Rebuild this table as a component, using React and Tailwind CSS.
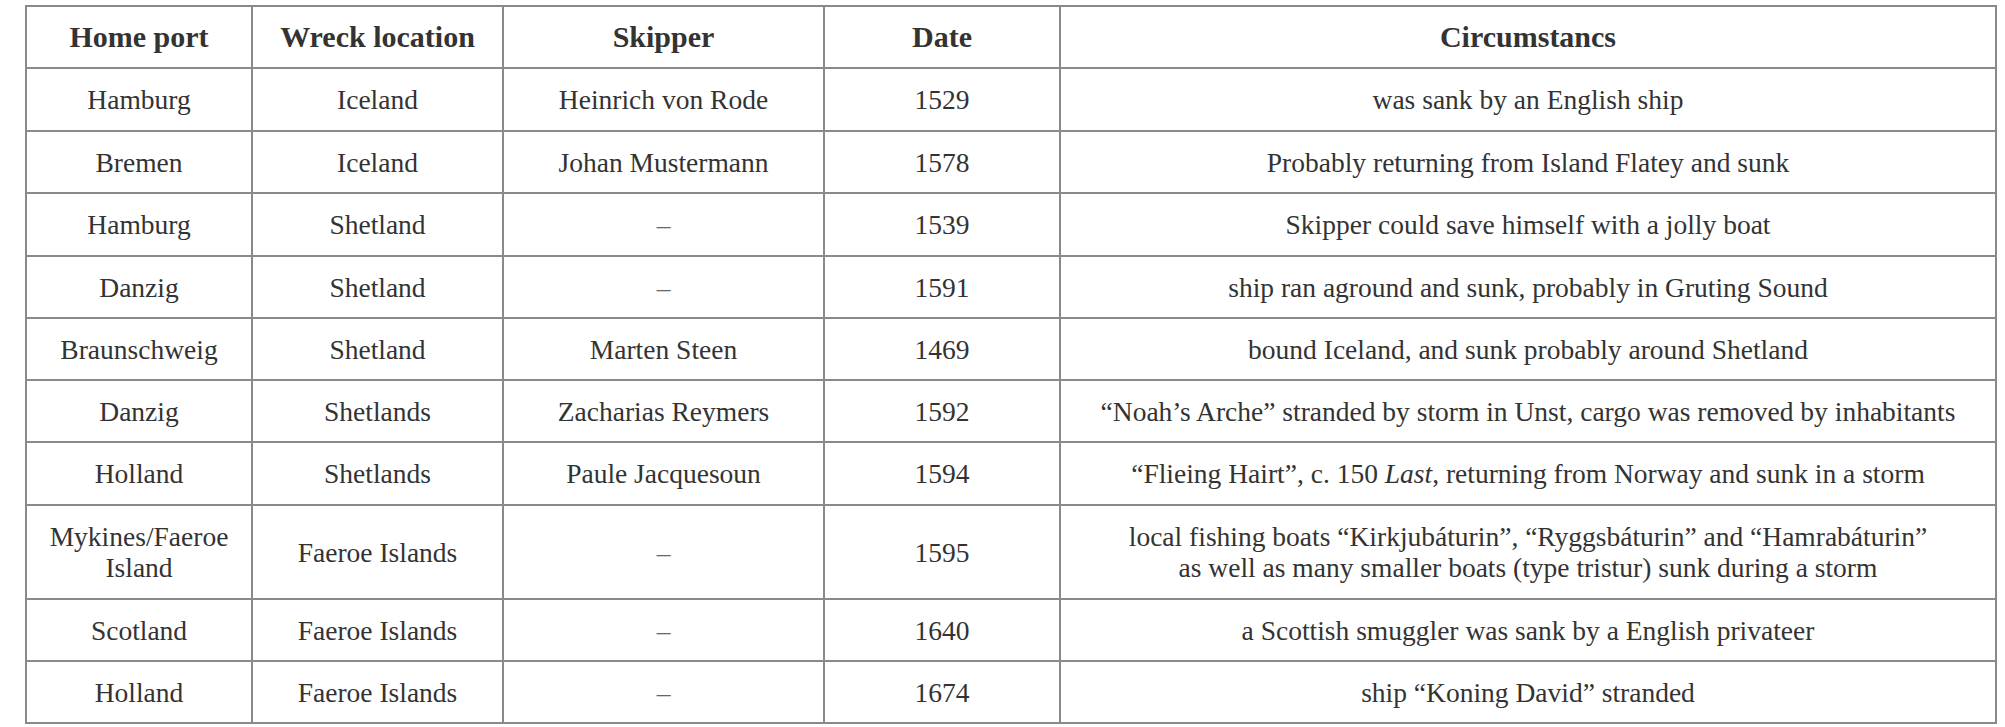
const rows = [
  { port: 'Hamburg', wreck: 'Iceland', skipper: 'Heinrich von Rode', date: '1529', text: 'was sank by an English ship', h: 'h-[63px]' },
  { port: 'Bremen', wreck: 'Iceland', skipper: 'Johan Mustermann', date: '1578', text: 'Probably returning from Island Flatey and sunk', h: 'h-[62px]' },
  { port: 'Hamburg', wreck: 'Shetland', skipper: '–', date: '1539', text: 'Skipper could save himself with a jolly boat', h: 'h-[63px]' },
  { port: 'Danzig', wreck: 'Shetland', skipper: '–', date: '1591', text: 'ship ran aground and sunk, probably in Gruting Sound', h: 'h-[62px]' },
  { port: 'Braunschweig', wreck: 'Shetland', skipper: 'Marten Steen', date: '1469', text: 'bound Iceland, and sunk probably around Shetland', h: 'h-[62px]' },
  { port: 'Danzig', wreck: 'Shetlands', skipper: 'Zacharias Reymers', date: '1592', text: '“Noah’s Arche” stranded by storm in Unst, cargo was removed by inhabitants', h: 'h-[62px]' },
  {
    port: 'Holland',
    wreck: 'Shetlands',
    skipper: 'Paule Jacquesoun',
    date: '1594',
    text: (
      <>
        “Flieing Hairt”, c. 150 <i>Last</i>, returning from Norway and sunk in a storm
      </>
    ),
    h: 'h-[63px]',
  },
  {
    port: 'Mykines/Faeroe Island',
    wreck: 'Faeroe Islands',
    skipper: '–',
    date: '1595',
    text: (
      <>
        local fishing boats “Kirkjubáturin”, “Ryggsbáturin” and “Hamrabáturin”
        <br />
        as well as many smaller boats (type tristur) sunk during a storm
      </>
    ),
    h: 'h-[94px]',
  },
  { port: 'Scotland', wreck: 'Faeroe Islands', skipper: '–', date: '1640', text: 'a Scottish smuggler was sank by a English privateer', h: 'h-[62px]' },
  { port: 'Holland', wreck: 'Faeroe Islands', skipper: '–', date: '1674', text: 'ship “Koning David” stranded', h: 'h-[62px]' },
];

const cell = "[font-family:'Times_New_Roman',Times,serif] border-2 border-[#8a8a8a] px-2 py-0 text-center align-middle";

export default function App() {
  return (
    <div className="[font-family:'Times_New_Roman',Times,serif] w-[2005px] h-[727px] bg-white pt-[5px] pl-[25px] text-[#333]">
      <table className="[font-family:'Times_New_Roman',Times,serif] table-fixed border-collapse w-[1970px] text-[#333]">
        <colgroup>
          <col className="w-[226px]" />
          <col className="w-[251px]" />
          <col className="w-[321px]" />
          <col className="w-[236px]" />
          <col className="w-[936px]" />
        </colgroup>
        <thead>
          <tr className="h-[62px] text-[30px] font-bold leading-none">
            <th className={cell}>Home port</th>
            <th className={cell}>Wreck location</th>
            <th className={cell}>Skipper</th>
            <th className={cell}>Date</th>
            <th className={cell}>Circumstancs</th>
          </tr>
        </thead>
        <tbody className="text-[27.5px] leading-[31px]">
          {rows.map((r, i) => (
            <tr key={i} className={r.h}>
              <td className={cell}>{r.port}</td>
              <td className={cell}>{r.wreck}</td>
              <td className={`${cell} ${r.skipper === '–' ? 'text-[#666]' : ''}`}>{r.skipper}</td>
              <td className={cell}>{r.date}</td>
              <td className={cell}>{r.text}</td>
            </tr>
          ))}
        </tbody>
      </table>
    </div>
  );
}
